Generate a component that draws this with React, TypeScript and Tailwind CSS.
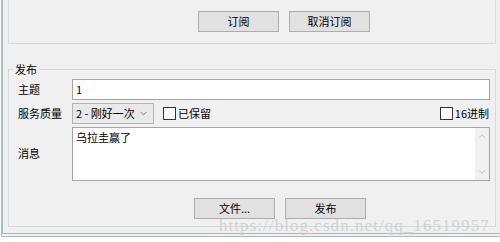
import { ChevronDown, ChevronUp } from "lucide-react"

const font = { fontFamily: '"Noto Sans CJK SC", "Microsoft YaHei", sans-serif' }

function WinButton({ label, className = "" }: { label: string; className?: string }) {
    return (
        <div
            className={`h-[21px] w-[81px] flex items-center justify-center bg-[#e1e1e1] border border-[#adadad] text-[11px] text-black ${className}`}
        >
            {label}
        </div>
    )
}

function CheckBox({ label }: { label: string }) {
    return (
        <div className="flex items-center gap-[2px] text-[11px] whitespace-nowrap">
            <div className="w-[13px] h-[13px] border border-[#333] bg-white" />
            <span>{label}</span>
        </div>
    )
}

export default function App() {
    return (
        <div className="w-[500px] h-[242px] bg-white relative overflow-hidden" style={font}>
            <div className="ml-[1px] h-[237px] border-l-2 border-b-[4px] border-double border-[#a9b8d6] bg-[#f0f0f0] pl-[5px] pr-[4px] overflow-hidden">
                {/* subscribe group */}
                <div className="mt-[-12px] h-[56px] border border-[#d9d9d9] flex items-end pb-[11px]">
                    <WinButton label="订阅" className="ml-[189px]" />
                    <WinButton label="取消订阅" className="ml-[10px]" />
                </div>

                {/* publish group */}
                <div className="relative mt-[25px] h-[158px] border border-[#d9d9d9] pt-[9px] pl-[9px] pr-[5px]">
                    <span className="absolute left-[4px] top-[-10px] bg-[#f0f0f0] px-[2px] text-[11px] leading-[18px]">
                        发布
                    </span>

                    <div className="flex items-center h-[21px]">
                        <span className="w-[54px] text-[11px]">主题</span>
                        <div className="flex-1 h-[21px] bg-white border border-[#a5a5a5] flex items-center px-[3px] text-[11px]">
                            1
                        </div>
                    </div>

                    <div className="flex items-center h-[21px] mt-[3px]">
                        <span className="w-[54px] text-[11px] whitespace-nowrap">服务质量</span>
                        <div className="w-[82px] h-[21px] bg-[#e9e9e9] border border-[#b4b4b4] flex items-center pl-[3px] pr-[4px] text-[11px] whitespace-nowrap">
                            <span className="flex-1">2 - 刚好一次</span>
                            <ChevronDown size={11} strokeWidth={1.5} className="text-[#555]" />
                        </div>
                        <div className="ml-[9px]">
                            <CheckBox label="已保留" />
                        </div>
                        <div className="ml-auto mr-[1px]">
                            <CheckBox label="16进制" />
                        </div>
                    </div>

                    <div className="flex items-center mt-[3px]">
                        <span className="w-[54px] text-[11px] mt-[-2px]">消息</span>
                        <div className="flex-1 h-[54px] bg-white border border-[#a5a5a5] flex">
                            <div className="flex-1 px-[3px] text-[11px] leading-[16px] pt-[1px]">乌拉圭赢了</div>
                            <div className="w-[14px] bg-[#f0f0f0] flex flex-col items-center justify-between py-[3px]">
                                <ChevronUp size={10} strokeWidth={1.5} className="text-[#a3a3a3]" />
                                <ChevronDown size={10} strokeWidth={1.5} className="text-[#a3a3a3]" />
                            </div>
                        </div>
                    </div>

                    <div className="flex mt-[17px]">
                        <WinButton label="文件..." className="ml-[176px]" />
                        <WinButton label="发布" className="ml-[10px]" />
                    </div>
                </div>
            </div>

            {/* watermark */}
            <span
                className="absolute left-[219px] top-[218px] text-[17px] text-[#d2d2d2] tracking-[1.05px] leading-[15px] whitespace-nowrap"
                style={{ fontFamily: '"Liberation Serif", serif' }}
            >
                https://blog.csdn.net/qq_16519957
            </span>
        </div>
    )
}
